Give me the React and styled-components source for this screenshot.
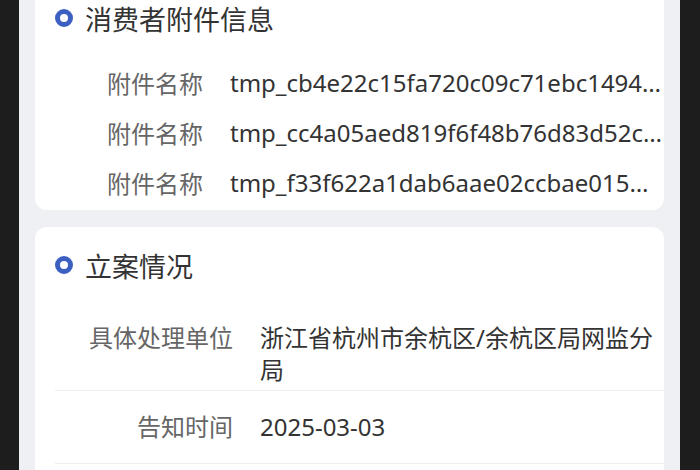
import React from "react";
import styled, { createGlobalStyle } from "styled-components";

const GlobalStyle = createGlobalStyle`
  html, body {
    margin: 0;
    padding: 0;
    background: #1d1d1d;
  }
  body {
    font-family: "Noto Sans", "Noto Sans CJK SC", sans-serif;
  }
`;

const Frame = styled.div`
  display: flex;
  height: 470px;
  padding: 0 20px 0 19px;
  overflow: hidden;
`;

const Screen = styled.div`
  flex: 1;
  min-width: 0;
  background: #eef0f4;
  padding: 0 16px;
  overflow: hidden;
`;

// the page is scrolled a little, so the first card's top sits above the fold
const Scroller = styled.div`
  display: flex;
  flex-direction: column;
  gap: 17px;
  margin-top: -20px;
`;

const Card = styled.section`
  background: #fff;
  border-radius: 12px;
  padding: 20px 0 ${(p) => p.$bottom || 0}px;
`;

const CardTitle = styled.h3`
  display: flex;
  align-items: center;
  gap: 12px;
  margin: 0 0 ${(p) => p.$gap}px;
  padding-left: 20px;
  height: 36px;
  font-size: 27px;
  font-weight: 400;
  color: #333;
`;

const Ring = styled.span`
  box-sizing: border-box;
  width: 18px;
  height: 18px;
  border-radius: 50%;
  border: 5px solid #3c5fc2;
  flex-shrink: 0;
`;

const FileRow = styled.div`
  display: grid;
  grid-template-columns: 148px minmax(0, 1fr);
  column-gap: 27px;
  align-items: center;
  height: 50px;
  padding: 0 2px 0 20px;
  font-size: 24px;
`;

const DetailRow = styled.div`
  display: grid;
  grid-template-columns: 178px minmax(0, 1fr);
  column-gap: 27px;
  align-content: center;
  align-items: start;
  min-height: 72px;
  margin-left: 20px;
  border-bottom: 1px solid #eeeeee;
  font-size: 24px;
  line-height: 32px;
`;

const Label = styled.span`
  color: #666;
  text-align: right;
  white-space: nowrap;
`;

const FileName = styled.span`
  color: #333;
  white-space: nowrap;
  overflow: hidden;
  text-overflow: ellipsis;
`;

const Value = styled.span`
  color: #333;
`;

const files = [
  "tmp_cb4e22c15fa720c09c71ebc1494e8a3f27d6.jpg",
  "tmp_cc4a05aed819f6f48b76d83d52c0b9e1a74f.jpg",
  "tmp_f33f622a1dab6aae02ccbae01573e9d4c8b2.jpg",
];

const details = [
  { label: "具体处理单位", value: "浙江省杭州市余杭区/余杭区局网监分局" },
  { label: "告知时间", value: "2025-03-03" },
];

export default function App() {
  return (
    <>
      <GlobalStyle />
      <Frame>
        <Screen>
          <Scroller>
            <Card $bottom={3}>
              <CardTitle $gap={21}>
                <Ring />
                消费者附件信息
              </CardTitle>
              {files.map((name) => (
                <FileRow key={name}>
                  <Label>附件名称</Label>
                  <FileName>{name}</FileName>
                </FileRow>
              ))}
            </Card>
            <Card $bottom={40}>
              <CardTitle $gap={35}>
                <Ring />
                立案情况
              </CardTitle>
              {details.map((d) => (
                <DetailRow key={d.label}>
                  <Label>{d.label}</Label>
                  <Value>{d.value}</Value>
                </DetailRow>
              ))}
            </Card>
          </Scroller>
        </Screen>
      </Frame>
    </>
  );
}
